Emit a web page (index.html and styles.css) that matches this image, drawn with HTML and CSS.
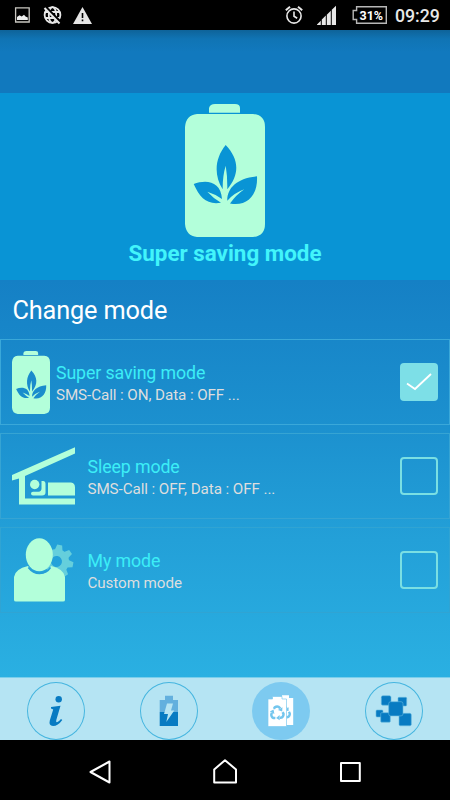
FILE: index.html
```html
<!DOCTYPE html>
<html lang="en">
<head>
<meta charset="utf-8">
<title>Super saving mode</title>
<link rel="stylesheet" href="styles.css">
</head>
<body>
<svg width="0" height="0" class="defs" aria-hidden="true">
  <symbol id="battery" viewBox="0 0 80 133" preserveAspectRatio="none">
    <path fill="#b3ffda" d="M24 8.7V4Q25 0 30 0H50Q55 0 55 4V8.7Z"/>
    <path fill="#b3ffda" fill-rule="evenodd" d="M12 10H68Q80 11 80 23V120Q80 132 68 133H12Q1 132 0 120V23Q1 11 12 10Z
    M40.7 41C30 54 28.500 71 37.700 85.3Q37.500 72 40.700 61.700Q42.500 72 42.300 85.3C55 70 54 55 40.700 41Z
    M8.700 80C21 75 36 77 37 95Q30 90 22.300 87.700Q29 95 36 98.700C22 101 15 94 8.700 80Z
    M72 72.300C52 74 42 84 42.300 96.700Q49 89 59.300 85.3Q51 91 45 99.500C62 103 73 91 72 72.300Z"/>
  </symbol>
  <symbol id="arrows" viewBox="-8 -8 16 16">
    <g id="arrow"><path d="M-3.400-4.200L-2.400-5.800Q-1.500-6.500 0-6.500Q1.500-6.500 2.300-5.300L2.800-4.500" fill="none" stroke="#73c6ee" stroke-width="2.500"/><path d="M.6-3L5.100-5.700L4.900-1.500Z" fill="#73c6ee"/></g>
    <use href="#arrow" transform="rotate(120)"/><use href="#arrow" transform="rotate(240)"/>
  </symbol>
</svg>
<div class="screen">
  <header class="status">
    <svg class="status-left" width="80" height="20" viewBox="14 5 80 20">
      <path d="M15.6 7.8H29.2V22H15.6Z" fill="none" stroke="#c9c7c1" stroke-width="1.3"/>
      <path d="M17 20V17L19.5 15.2L21.7 16.6L24 14.8L25.5 16.6L27.8 17.5V20Z" fill="#eee"/>
      <g fill="none" stroke="#e8e8e8" stroke-width="1.8"><circle cx="52.5" cy="15" r="7.9"/><ellipse cx="52.5" cy="15" rx="3.7" ry="7.9"/><path d="M45.5 12H59.5M45.5 18H59.5"/></g>
      <path d="M46 7.500L61 22.500" stroke="#000" stroke-width="2.500"/>
      <path d="M44.500 8L59.500 23.500" stroke="#e8e8e8" stroke-width="2"/>
      <path d="M82.5 7L92 24H73Z" fill="#e5e5e5"/>
      <path d="M82.5 13V18M82.5 19.5V21.3" stroke="#000" stroke-width="1.6"/>
    </svg>
    <svg class="status-right" width="104" height="20" viewBox="284 5 104 20">
      <g fill="none" stroke="#e8e8e8" stroke-width="1.6"><circle cx="294" cy="16" r="7.1"/><path d="M294 11.5V16.2L297.2 18.2"/><path stroke-width="2" d="M285.8 10.2L290 6.8M298 6.8L302.2 10.2"/></g>
      <path fill="#e8e8e8" d="M317 25V24.5L320.8 20.8V25ZM321.8 25V19.6L325.8 15.6V25ZM326.8 25V14.7L330.8 10.7V25ZM331.8 25V9.7L336 5.8V25Z"/>
      <path d="M356.6 6.7H386.3V23.3H356.6V19.5H353.2V10.5H356.6Z" fill="none" stroke="#b7b7b7" stroke-width="1.4"/>
      <text class="percent" x="371.3" y="19.5" text-anchor="middle" textLength="23.5">31%</text>
    </svg>
    <time class="clock">09:29</time>
  </header>
  <main class="content">
    <div class="toolbar"></div>
    <section class="hero">
      <svg class="hero-icon"><use href="#battery"/></svg>
      <h1>Super saving mode</h1>
    </section>
    <h2>Change mode</h2>
    <div class="modes">
      <div class="mode">
        <svg class="pic small"><use href="#battery"/></svg>
        <div class="label"><h3>Super saving mode</h3><p>SMS-Call : ON, Data : OFF ...</p></div>
        <span class="check on"><svg width="38" height="38" viewBox="0 0 38 38"><path d="M7 20.500L15 26L31 11" fill="none" stroke="#fff" stroke-width="1.8"/></svg></span>
      </div>
      <div class="mode second">
        <svg class="pic" width="63" height="58" viewBox="12 447.500 63 58" fill="#b3ffda">
          <path d="M12 475.5L75 447.8V454L25 476.500V499H75V505H19V479L12 481Z"/>
          <circle cx="34.700" cy="485" r="4.700"/>
          <path d="M41.500 481.500H43.500Q45.500 481.500 45.500 484V493Q45.500 496 42 496H33Q31 496 31 494Q31 492.300 33 492.300H38.500Q41.500 492 41.500 489ZM48 483H71Q75 483.500 75 488V496H48Z"/>
        </svg>
        <div class="label"><h3>Sleep mode</h3><p>SMS-Call : OFF, Data : OFF ...</p></div>
        <span class="check"></span>
      </div>
      <div class="mode third">
        <svg class="pic" width="63" height="64" viewBox="12 538 63 64">
          <g transform="translate(56.500 561.500) rotate(11)">
            <circle r="9" fill="none" stroke="#65cfdc" stroke-width="7"/>
            <path fill="#65cfdc" d="M-4-11L-2.500-16.800H2.500L4-11ZM-4 11L-2.500 16.800H2.500L4 11ZM11-4L16.800-2.500V2.500L11 4ZM5-10.500L10.200-13.800L13.800-10.200L10.500-5ZM10.500 5L13.800 10.200L10.200 13.800L5 10.500Z"/>
          </g>
          <path d="M14 577Q15 569 28 566Q33 574 40 574Q48 573 51 566Q64 569 65 577V600Q65 601.500 63 601.500H16Q14 601.500 14 600Z" fill="#b3ffda"/>
          <path d="M28.300 567.500Q33 573.500 39.500 573.500Q47 573 50.500 567.500" fill="none" stroke="#269fd8" stroke-width="1.5"/>
          <ellipse cx="39.300" cy="554.800" rx="13.500" ry="16.500" fill="#b3ffda"/>
        </svg>
        <div class="label"><h3>My mode</h3><p>Custom mode</p></div>
        <span class="check"></span>
      </div>
    </div>
  </main>
  <nav class="tabs">
    <span class="tab"><svg width="58" height="58" viewBox="0 0 58 58"><circle cx="31.700" cy="17.300" r="3.200" fill="#087bc2"/><path fill="#087bc2" d="M24 25L33.500 23.700L29.300 38Q28.700 40.500 30 40.300Q31.500 40 34 37L35.300 38Q31 44 26 44Q21.500 43.800 22.800 38.500L26.200 27.500L24 26.500Z"/></svg></span>
    <span class="tab"><svg width="58" height="58" viewBox="0 0 58 58"><path fill="#63b0de" d="M19.700 18H25V13.700H33V18H38V30H19.700Z"/><path fill="#087bc2" d="M19.700 30H38V44H19.700Z"/><path fill="#b7e5f3" d="M27 21.500H33L31 28.500H34.300L26.300 40L28 32H24Z"/></svg></span>
    <span class="tab active"><svg width="58" height="58" viewBox="0 0 58 58">
      <path fill="#fff" d="M30 15.500V13.300H37V16H41.200V43H30Z"/>
      <use href="#arrows" x="24" y="23" width="15.500" height="15.500"/>
      <path fill="#fff" stroke="#80caef" stroke-width=".7" d="M16 17H20.500V14.500H30V17H34.500V44.500H16Z"/>
      <use href="#arrows" x="17.300" y="23" width="16" height="16"/>
    </svg></span>
    <span class="tab"><svg width="58" height="58" viewBox="0 0 58 58" fill="#087bc2"><g stroke="#66b9df" stroke-width=".6"><rect x="16.300" y="13.700" width="9.700" height="9.500" rx="1.500"/><rect x="33" y="15.300" width="8.700" height="8.700" rx="1"/><rect x="11" y="28" width="7" height="7" rx="1"/><rect x="15.700" y="30.700" width="9.600" height="9.500" rx="1"/><rect x="34" y="31.300" width="12.300" height="12.500" rx="1.500"/><rect x="23.700" y="19.700" width="14.300" height="14.200" rx="2"/></g></svg></span>
  </nav>
  <footer class="system">
    <svg width="450" height="60" viewBox="0 740 450 60" fill="none" stroke="#fff" stroke-width="2" stroke-linejoin="round"><path d="M109.500 761.500V782.500L90.500 772Z"/><path d="M214.200 769.500L225 760.200L236 769.500V782.500H214.200Z"/><path d="M341 763H359.800V781H341Z"/></svg>
  </footer>
</div>
</body>
</html>
```

FILE: styles.css
```css
* { box-sizing: border-box; margin: 0; padding: 0; }
body { background: #000; font-family: Roboto, "Liberation Sans", sans-serif; }
svg { display: block; }
.defs { position: absolute; }
.screen { width: 450px; height: 800px; display: flex; flex-direction: column; overflow: hidden; }
.status { height: 30px; background: #000; display: flex; align-items: center; padding: 0 10px 0 14px; flex: none; }
.status-right { margin-left: auto; }
.percent { fill: #fff; font-size: 12.5px; font-weight: 700; }
.clock { width: 45px; margin-left: 7px; color: #e8e8e8; font-size: 17.7px; line-height: 30px; padding-top: 1px; font-weight: 500; white-space: nowrap; }
.content { height: 647px; background: linear-gradient(#1077bd 0, #1580c5 250px, #1c91cf 400px, #23a0d8 510px, #2ab0e2 647px); }
.toolbar { height: 63px; background: linear-gradient(#0e6399, #1074b4 9px, #1179be 22px); }
.hero { height: 187px; padding-top: 11px; background: #0994d5; display: flex; flex-direction: column; align-items: center; }
.hero-icon { width: 80px; height: 133px; }
h1 { font-size: 22.4px; line-height: 27px; margin-top: 3px; color: #42f4fb; font-weight: 700; white-space: nowrap; }
h2 { height: 59px; padding: 1px 0 0 12.5px; color: #fff; font-size: 25.3px; line-height: 60px; font-weight: 400; letter-spacing: -.15px; }
.modes { display: flex; flex-direction: column; gap: 8px; }
.mode { height: 86px; border: 1px solid #3aa8d9; display: flex; align-items: center; padding: 0 11px; }
.second { border-color: #36a4d3; }
.third { border-color: #30a4d3; }
.small { width: 38px; height: 63px; }
.pic { flex: none; }
.label { margin-left: 6px; padding-top: 3px; flex: 1; color: #dedede; white-space: nowrap; }
.second .label, .third .label { margin-left: 12.5px; }
h3 { font-size: 17.8px; line-height: 22px; color: #3ceef7; font-weight: 400; letter-spacing: -.12px; }
.label p { font-size: 15.2px; line-height: 22px; letter-spacing: -.08px; }
.check { width: 38px; height: 38px; border: 2px solid #7adfe3; border-radius: 4px; flex: none; }
.check.on { background: #7ddfe7; border: 0; }
.tabs { height: 63px; flex: none; padding: 4px 27px 0; background: #b5e4f3; border-top: 1px solid #79cfec; display: flex; justify-content: space-between; }
.tab { width: 58px; height: 58px; border-radius: 50%; box-shadow: inset 0 0 0 1px #45b5df; }
.tab.active { background: #7dcaf0; box-shadow: none; }
.system { height: 60px; background: #000; }
```
